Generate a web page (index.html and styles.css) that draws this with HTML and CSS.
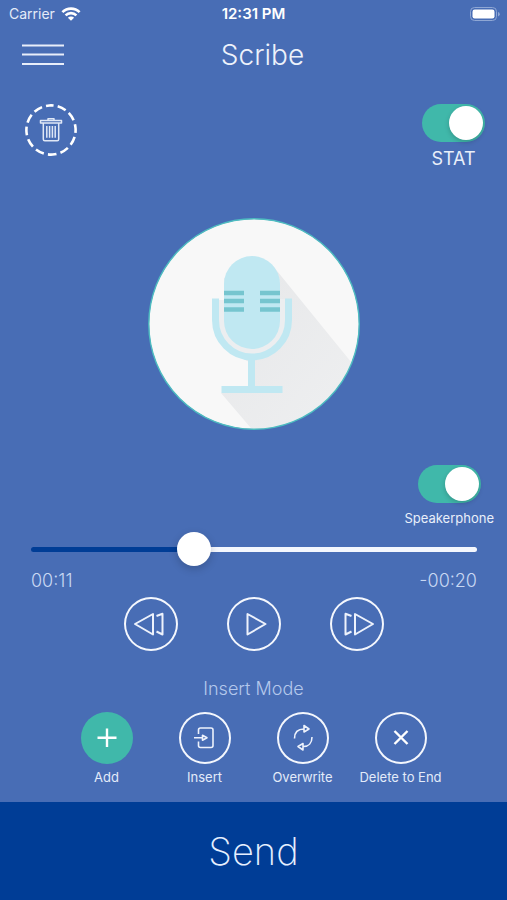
FILE: index.html
```html
<!DOCTYPE html>
<html lang="en">
<head>
<meta charset="utf-8">
<meta name="viewport" content="width=device-width, initial-scale=1">
<title>Scribe</title>
<link rel="stylesheet" href="styles.css">
</head>
<body>
<div class="app">
  <div class="status">
    <div class="carrier">
      <span>Carrier</span>
      <svg width="20" height="14" viewBox="0 0 20 14" fill="none" stroke="#fff" stroke-width="2.6" aria-hidden="true">
        <path d="M1.4 5.2A12.2 12.2 0 0 1 18.6 5.2"/>
        <path d="M4.6 8.4A7.6 7.6 0 0 1 15.4 8.4"/>
        <path d="M10 13.8L6.9 10.7A4.4 4.4 0 0 1 13.1 10.7Z" fill="#fff" stroke="none"/>
      </svg>
    </div>
    <time class="clock">12:31 PM</time>
    <svg class="battery" width="30" height="14" viewBox="0 0 30 14" aria-hidden="true">
      <rect x=".5" y=".5" width="26" height="13" rx="4" fill="none" stroke="#8fa7d4"/>
      <rect x="2.500" y="2.500" width="22" height="9" rx="2.200" fill="#fff"/>
      <path d="M28 5v4.400q1.800-.6 1.800-2.200T28 5z" fill="#8fa7d4"/>
    </svg>
  </div>

  <header class="header">
    <button class="menu" type="button" aria-label="Menu">
      <svg width="42" height="22" viewBox="0 0 42 22" fill="none" stroke="#e8eefa" stroke-width="2" aria-hidden="true">
        <path d="M0 1.500h42M0 10.500h42M0 20h42"/>
      </svg>
    </button>
    <h1 class="title">Scribe</h1>
  </header>

  <main class="main">
    <div class="top-row">
      <button class="trash" type="button" aria-label="Delete recording">
        <svg width="52" height="52" viewBox="0 0 52 52" fill="none" stroke="#fff" aria-hidden="true">
          <circle cx="26" cy="26" r="24.600" stroke-width="2.600" stroke-dasharray="8.800 4.080" stroke-dashoffset="4.400" transform="rotate(-94 26 26)"/>
          <g stroke="#dfe7f6" stroke-width="1.500" stroke-linejoin="round">
            <path d="M15.500 16.500h21v2.500h-21z"/>
            <path d="M23 16v-1.200h6V16"/>
            <path d="M18.300 19v16.200q0 1.500 1.500 1.500h12.400q1.500 0 1.500-1.500V19"/>
            <path d="M21.800 22v11.800M24.600 22v11.800M27.400 22v11.800M30.200 22v11.800"/>
          </g>
        </svg>
      </button>
      <label class="toggle toggle-stat">
        <input class="switch" type="checkbox" role="switch" checked>
        <span>STAT</span>
      </label>
    </div>

    <button class="record" type="button" aria-label="Record">
      <svg viewBox="0 0 212 212" aria-hidden="true">
        <defs>
          <clipPath id="disc"><circle cx="106" cy="106" r="105"/></clipPath>
          <linearGradient id="shade" x1="0" y1="0" x2="1" y2="1">
            <stop offset="0" stop-color="#e6e7e9"/>
            <stop offset="1" stop-color="#eff0f1"/>
          </linearGradient>
        </defs>
        <circle cx="106" cy="106" r="105" fill="#f8f8f8"/>
        <path clip-path="url(#disc)" fill="url(#shade)" d="M125 48L216 160V216H108L73 175L103 170V145L84 135L76 118V60z"/>
        <path d="M70.500 81V103A33.500 34.500 0 0 0 137.500 103V81H132V60H76V81z" fill="#eceef0"/>
        <path d="M70.500 60h5.500v22h-5.500z" fill="#f8f8f8"/>
        <rect x="76" y="38" width="56" height="93" rx="28" fill="#c0e8f2"/>
        <path d="M76 75h20M76 83h20M76 91.500h20M112 75h20M112 83h20M112 91.500h20" stroke="#76c5cf" stroke-width="4.600"/>
        <path d="M67.500 80.500V102A36.500 37 0 0 0 140.500 102V80.500" fill="none" stroke="#c0e8f2" stroke-width="7"/>
        <path d="M103.500 139V171M73.500 171.500H134.500" fill="none" stroke="#c0e8f2" stroke-width="7"/>
        <circle cx="106" cy="106" r="105.200" fill="none" stroke="#4dbcc0" stroke-width="1.400"/>
      </svg>
    </button>

    <label class="toggle toggle-speaker">
      <input class="switch" type="checkbox" role="switch" checked>
      <span>Speakerphone</span>
    </label>

    <div class="player">
      <input class="seek" type="range" min="0" max="31" value="11" aria-label="Position">
      <div class="times">
        <span>00:11</span>
        <span>-00:20</span>
      </div>
    </div>

    <div class="transport">
      <button class="round" type="button" aria-label="Rewind">
        <svg viewBox="0 0 54 54" aria-hidden="true">
          <path d="M11 27L29 17V37.500zM32.500 19L38.500 16.800V37.500L32.500 34.500"/>
        </svg>
      </button>
      <button class="round" type="button" aria-label="Play">
        <svg viewBox="0 0 54 54" aria-hidden="true">
          <path d="M20.500 17V37.500L38.500 27z"/>
        </svg>
      </button>
      <button class="round" type="button" aria-label="Fast forward">
        <svg viewBox="0 0 54 54" aria-hidden="true">
          <path d="M43 27L25 17V37.500zM21.500 19L15.500 16.800V37.500L21.500 34.500"/>
        </svg>
      </button>
    </div>

    <section class="modes">
      <h2 class="modes-title">Insert Mode</h2>
      <div class="mode-list">
        <button class="mode mode-active" type="button">
          <svg viewBox="0 0 52 52" aria-hidden="true">
            <path class="bold" d="M26 16.500V35M16.500 25.800H35.500"/>
          </svg>
          <span>Add</span>
        </button>
        <button class="mode" type="button">
          <svg viewBox="0 0 52 52" aria-hidden="true">
            <path d="M19.500 22V18Q19.500 16 21.500 16H32Q34 16 34 18V33.500Q34 35.500 32 35.500H21.500Q19.500 35.500 19.500 33.500V29.500M15 25.800H23M23.500 23.300V28.300L28 25.800z"/>
          </svg>
          <span>Insert</span>
        </button>
        <button class="mode" type="button">
          <svg viewBox="0 0 52 52" aria-hidden="true">
            <path d="M17.500 26.500C17.500 20.500 21 17 27 17M27 13.500V20L32 17zM35 25C35 31 31.500 34.500 26.500 34.500M26 31.500V38L21 34.500z"/>
          </svg>
          <span>Overwrite</span>
        </button>
        <button class="mode" type="button">
          <svg viewBox="0 0 52 52" aria-hidden="true">
            <path class="bold" d="M19.500 19L32.500 32M32.500 19L19.500 32"/>
          </svg>
          <span>Delete to End</span>
        </button>
      </div>
    </section>
  </main>

  <button class="send" type="button">Send</button>
</div>
</body>
</html>
```
FILE: styles.css
```css
* {
  box-sizing: border-box;
}

body {
  margin: 0;
  background: #486db5;
  color: #fff;
  font-family: Inter, "Liberation Sans", sans-serif;
}

button {
  margin: 0;
  padding: 0;
  border: 0;
  background: none;
  color: inherit;
  font: inherit;
}

svg {
  display: block;
}

.app {
  display: flex;
  flex-direction: column;
  min-height: 100vh;
}

.status {
  display: grid;
  grid-template-columns: 1fr auto 1fr;
  align-items: center;
  height: 27px;
  padding: 0 7px;
}

.carrier {
  display: flex;
  align-items: center;
  gap: 6px;
  padding-left: 2px;
  color: #e4ebf8;
  font-size: 14px;
}

.clock {
  font-size: 15px;
  font-weight: 600;
}

.battery {
  justify-self: end;
}

.header {
  display: grid;
  grid-template-columns: 1fr auto 1fr;
  align-items: center;
  height: 55px;
  padding: 0 4px 0 22px;
}

.title {
  margin: 0;
  color: #edf2fb;
  font-size: 28px;
  font-weight: 300;
}

.main {
  display: flex;
  flex: 1;
  flex-direction: column;
  padding: 22px 0 16px;
}

.top-row {
  display: flex;
  justify-content: space-between;
  align-items: flex-start;
  padding: 0 22px 0 25px;
}

.toggle {
  display: flex;
  flex-direction: column;
  align-items: center;
  color: #e9effa;
}

.toggle-stat {
  gap: 6px;
  font-size: 18px;
  line-height: 22px;
}

.toggle-speaker {
  align-self: flex-end;
  gap: 6px;
  margin: 35px 13px 0 0;
  font-size: 13px;
  line-height: 18px;
}

.switch {
  appearance: none;
  width: 63px;
  height: 38px;
  margin: 0;
  padding: 2px;
  border-radius: 19px;
  background: #ffffff55;
}

.switch::before {
  content: "";
  display: block;
  width: 34px;
  height: 34px;
  border-radius: 50%;
  background: #fff;
  box-shadow: 0 2px 5px #00000030;
}

.switch:checked {
  background: #40b8aa;
}

.switch:checked::before {
  margin-left: auto;
}

.record {
  align-self: center;
  width: 212px;
  margin-top: 48px;
}

.player {
  padding: 5px 30px 0 31px;
}

.seek {
  appearance: none;
  display: block;
  width: 100%;
  height: 34px;
  margin: 0;
  background: none;
}

.seek::-webkit-slider-runnable-track {
  height: 5px;
  border-radius: 3px;
  background: linear-gradient(to right, #003d96 36%, #f4f7fd 36%);
}

.seek::-webkit-slider-thumb {
  appearance: none;
  width: 34px;
  height: 34px;
  margin-top: -15px;
  border-radius: 50%;
  background: #fff;
  box-shadow: 0 3px 8px #00000030;
}

.times {
  display: flex;
  justify-content: space-between;
  margin-top: 3px;
  color: #c8d8f3;
  font-size: 18px;
  font-weight: 300;
  line-height: 24px;
}

.transport {
  display: flex;
  justify-content: center;
  gap: 49px;
  margin-top: 4px;
}

.round {
  width: 54px;
  height: 54px;
  border-radius: 50%;
  box-shadow: inset 0 0 0 2px #f4f7fd;
}

.round path,
.mode path {
  fill: none;
  stroke: #edf2fc;
  stroke-width: 2;
  stroke-linejoin: round;
}

.mode path {
  stroke-width: 1.6;
}

.mode .bold {
  stroke: #fff;
  stroke-width: 2.4;
}

.modes-title {
  margin: 26px 0 0;
  color: #b4c8ec;
  font-size: 18px;
  font-weight: 300;
  line-height: 24px;
  text-align: center;
}

.mode-list {
  display: grid;
  grid-template-columns: repeat(4, 98px);
  justify-content: center;
  margin-top: 11px;
}

.mode {
  display: flex;
  flex-direction: column;
  align-items: center;
  gap: 4px;
  color: #e3ebf9;
  font-size: 13px;
  line-height: 18px;
  white-space: nowrap;
}

.mode svg {
  width: 52px;
  height: 52px;
  border-radius: 50%;
  box-shadow: inset 0 0 0 2px #f4f7fd;
}

.mode-active svg {
  background: #40b8aa;
  box-shadow: none;
}

.send {
  height: 98px;
  background: #003d96;
  color: #e6f0ff;
  font-size: 38px;
  font-weight: 200;
}
```
